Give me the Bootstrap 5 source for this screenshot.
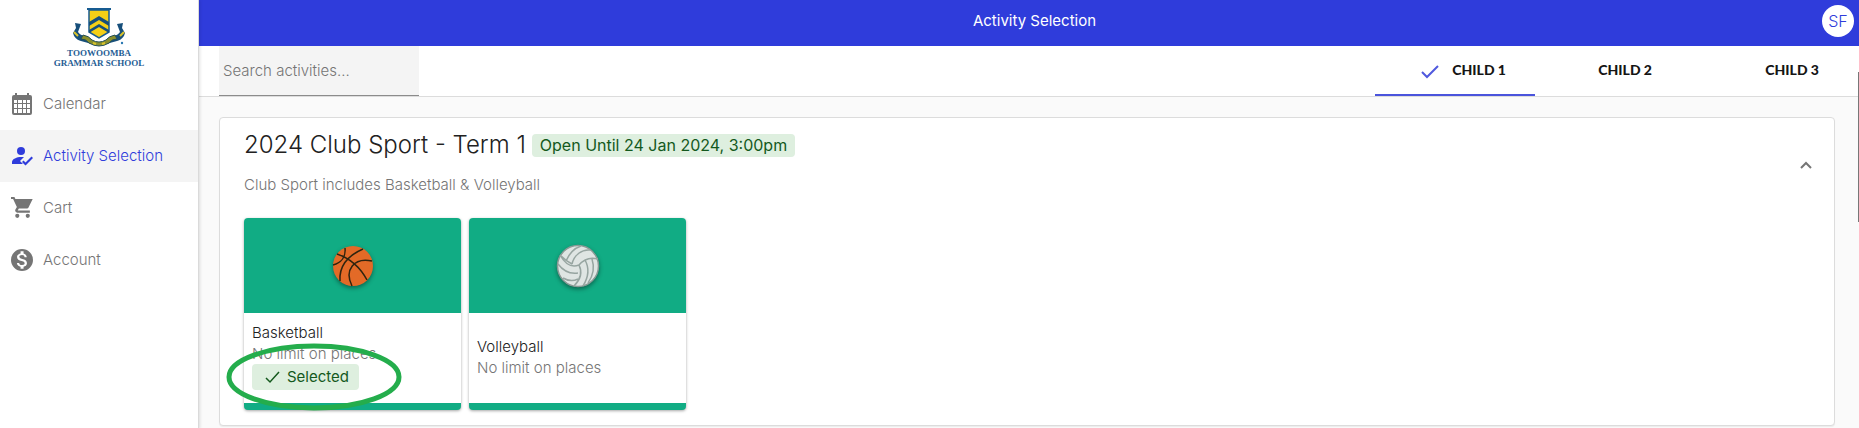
<!DOCTYPE html>
<html lang="en">
<head>
<meta charset="utf-8">
<meta name="viewport" content="width=device-width, initial-scale=1">
<title>Activity Selection</title>
<link rel="stylesheet" href="https://cdn.jsdelivr.net/npm/bootstrap@5.3.0/dist/css/bootstrap.min.css">
<style>
:root { --brand: #2f3cdb; --pitch: #11ac84; --muted: #757575; --line: #dcdcdc; }
body { font-family: Inter, "Open Sans", sans-serif; font-size: 15px; line-height: 20px; font-weight: 300; color: #212121; background: #fafafa; }
.side { width: 199px; background: #fff; border-right: 1px solid #dadada; box-shadow: 1px 0 3px rgba(0,0,0,.12); z-index: 2; }
.crest { height: 78px; padding-top: 8px; line-height: 10px; font-family: "Liberation Serif", serif; font-size: 9px; font-weight: 700; color: #1f5d94; }
.side-link { height: 52px; padding: 0 11px; gap: 10px; color: var(--muted); text-decoration: none; }
.side-link.active { background: #f4f4f4; color: var(--brand); }
.topbar { height: 46px; background: var(--brand); color: #fff; padding: 0 5px 4px 48px; font-weight: 400; }
.avatar { width: 32px; height: 32px; background: #fff; color: var(--brand); font-size: 16px; font-weight: 300; border: 0; }
.tools { height: 51px; background: #fff; border-bottom: 1px solid var(--line); padding: 0 11px 0 20px; }
.search { width: 200px; background: #f4f4f4; border: 0; border-bottom: 1px solid #8b8b8b; border-radius: 0; padding: 0 4px; font-weight: 300; font-size: 15px; }
.search::placeholder { color: #757575; opacity: 1; }
.kid { border: 0; border-bottom: 2px solid transparent; background: none; font: 900 14px/20px Lato, sans-serif; color: #151515; padding: 0 29px 0 0; width: 146px; gap: 10px; }
.kid.active { width: 160px; border-color: #4a54dc; }
.kid.last { width: 167px; }
.content-area { padding: 20px 24px 3px 20px; }
.panel { background: #fff; border: 1px solid var(--line); border-radius: 4px; padding: 14px 20px 15px 24px; box-shadow: 0 1px 1px rgba(0,0,0,.06); }
.panel h1 { font-size: 24px; line-height: 26px; font-weight: 300; }
.heading { gap: 6px; margin-bottom: 17px; }
.tag { background: #deefdf; color: #14591d; border-radius: 4px; font-weight: 400; padding: 2px 10px; line-height: 19px; }
.deadline { font-size: 16px; padding: 2px 8px; }
.toggle { margin-top: 5px; }
.quiet { color: var(--muted); }
.tiles { gap: 8px; margin-top: 23px; }
.tile { width: 217px; background: #fff; border-radius: 4px; box-shadow: 0 1px 3px rgba(0,0,0,.35); border-bottom: 7px solid var(--pitch); overflow: hidden; color: #212121; text-decoration: none; }
.tile-top { height: 95px; background: var(--pitch); }
.tile-text { height: 90px; padding: 0 8px 2px; line-height: 21px; }
.picked { padding: 3px 10px 3px 12px; gap: 6px; line-height: 20px; margin-bottom: 3px; }
.ring { position: absolute; left: -19px; top: 125px; width: 177px; height: 68px; pointer-events: none; }
.ball { filter: drop-shadow(0 2px 2px rgba(0,0,0,.4)); }
.thumb { position: absolute; right: 0; top: 72px; width: 1px; height: 150px; background: #777; }
</style>
</head>
<body>
<div class="d-flex min-vh-100 position-relative">
  <nav class="side flex-shrink-0 position-relative">
    <div class="crest text-center">
      <svg width="54" height="40" viewBox="0 0 54 40" class="d-block mx-auto" aria-hidden="true">
        <path d="M3 15l6 1-3 8c3 5 10 3 14 8l-1 4C12 33 3 34 1 25l3-5z" fill="#174f7b"/>
        <path d="M51 15l-6 1 3 8c-3 5-10 3-14 8l1 4c7-3 16-2 18-11l-3-5z" fill="#174f7b"/>
        <path d="M11 27q6 1 9 5 7 4 14 0 3-4 9-5l2 4q-5 0-8 4-10 6-20 0-3-4-8-4z" fill="#8a8f2c" stroke="#244f58"/>
        <path d="M2 24l4 4M52 24l-4 4M21 35l3 1M30 36l3-1" stroke="#d9c32b" stroke-width="2"/>
        <path d="M17 2h20v22l-10 6-10-6z" fill="#f5cf16" stroke="#175b91" stroke-width="1.500"/>
        <path d="M15 1h24" stroke="#175b91" stroke-width="2"/>
        <path d="M17 14l10-6 10 6v4l-10-6-10 6zM17 22l10-6 10 6v3l-10-6-10 6z" fill="#174f7b"/>
        <circle cx="50" cy="35" r="1.200" fill="#2b78b2"/>
      </svg>
      TOOWOOMBA<br>GRAMMAR SCHOOL
    </div>
    <a class="side-link d-flex align-items-center" href="#"><svg width="22" height="24" viewBox="0 0 22 24" fill="currentColor" aria-hidden="true"><path fill-rule="evenodd" d="M4 1h2v2h10V1h2v2h1a2 2 0 0 1 2 2v16a2 2 0 0 1-2 2H3a2 2 0 0 1-2-2V5a2 2 0 0 1 2-2h1zM3 8v3h3V8zm4 0v3h4V8zm5 0v3h3V8zm4 0v3h3V8zM3 12v4h3v-4zm4 0v4h4v-4zm5 0v4h3v-4zm4 0v4h3v-4zM3 17v4h3v-4zm4 0v4h4v-4zm5 0v4h3v-4zm4 0v4h3v-4z"/></svg>Calendar</a>
    <a class="side-link active d-flex align-items-center" aria-current="page" href="#"><svg width="22" height="22" viewBox="1 2 22 22" fill="currentColor" aria-hidden="true"><circle cx="11" cy="8" r="4"/><path d="M11 14c-4 0-9 2-9 5v2h11l-3-3 4-4zM15.500 22.500L12 19l1.500-1.500 2 2L21.500 13.500 23 15z"/></svg>Activity Selection</a>
    <a class="side-link d-flex align-items-center" href="#"><svg width="22" height="22" viewBox="1 2 21 21" fill="currentColor" aria-hidden="true"><path d="M7 18a2 2 0 1 0 0 4 2 2 0 0 0 0-4zm10 0a2 2 0 1 0 0 4 2 2 0 0 0 0-4zM1 2v2h2l3.600 7.600L5.200 14c-.7 1.300.3 3 1.800 3h12v-2H7.400l1.100-2H16c.7 0 1.400-.4 1.700-1L21.700 4H5.200l-.9-2z"/></svg>Cart</a>
    <a class="side-link d-flex align-items-center" href="#"><svg width="22" height="22" viewBox="2 2 20 20" fill="currentColor" aria-hidden="true"><path fill-rule="evenodd" d="M12 2a10 10 0 1 0 0 20 10 10 0 0 0 0-20zm1.400 16.100V20h-2.700v-1.900c-1.700-.4-3.200-1.500-3.300-3.400h2c.1 1.100.8 1.900 2.600 1.900 2 0 2.400-1 2.400-1.600 0-.8-.4-1.600-2.700-2.100-2.500-.6-4.200-1.600-4.200-3.700 0-1.700 1.400-2.800 3.200-3.200V4h2.700v2c1.900.5 2.800 1.900 2.900 3.400h-2c-.1-1.100-.7-1.900-2.300-1.900-1.500 0-2.400.7-2.400 1.600 0 .8.700 1.400 2.700 1.900 2.100.5 4.200 1.400 4.200 3.900 0 1.800-1.400 2.900-3.100 3.200z"/></svg>Account</a>
  </nav>
  <div class="flex-grow-1">
    <header class="topbar d-flex align-items-center">
      <div class="flex-grow-1 text-center">Activity Selection</div>
      <button class="avatar rounded-circle p-0" type="button">SF</button>
    </header>
    <div class="tools d-flex justify-content-between">
      <input class="search" type="search" placeholder="Search activities..." aria-label="Search activities">
      <div class="d-flex" role="tablist">
        <button class="kid active d-flex align-items-center justify-content-end" type="button" role="tab" aria-selected="true"><svg width="24" height="24" viewBox="0 0 24 24" fill="none" stroke="#5059de" stroke-width="2" aria-hidden="true"><path d="M4 14l5 5L20 8"/></svg>CHILD 1</button>
        <button class="kid d-flex align-items-center justify-content-end" type="button" role="tab" aria-selected="false">CHILD 2</button>
        <button class="kid last d-flex align-items-center justify-content-end" type="button" role="tab" aria-selected="false">CHILD 3</button>
      </div>
    </div>
    <main class="content-area">
      <section class="panel">
        <div class="d-flex align-items-center justify-content-between">
          <div>
            <div class="heading d-flex align-items-center"><h1 class="m-0">2024 Club Sport - Term 1</h1><span class="tag deadline">Open Until 24 Jan 2024, 3:00pm</span></div>
            <p class="quiet m-0">Club Sport includes Basketball &amp; Volleyball</p>
          </div>
          <button class="toggle btn p-0 border-0" type="button" aria-label="Collapse"><svg width="16" height="16" viewBox="0 0 16 16" fill="none" stroke="#757575" stroke-width="2" class="d-block"><path d="M3 10l5-5 5 5"/></svg></button>
        </div>
        <div class="tiles d-flex">
          <div class="position-relative">
            <a class="tile d-block" href="#">
              <div class="tile-top d-flex align-items-center justify-content-center">
                <svg class="ball" width="42" height="42" viewBox="0 0 42 42" aria-hidden="true"><circle cx="21" cy="21" r="20" fill="#e36a27"/><path d="M5 9c12 4 23 13 30 26M1 20c8-2 13-8 12-17M31 4C15 11 7 22 8 36M40 16c-18-4-28 9-20 25" fill="none" stroke="#30240f" stroke-width="1.500"/></svg>
              </div>
              <div class="tile-text d-flex flex-column justify-content-center align-items-start"><span>Basketball</span><span class="quiet">No limit on places</span><span class="tag picked d-flex align-items-center"><svg width="17" height="16" viewBox="0 0 17 16" fill="none" stroke="currentColor" stroke-width="1.500" aria-hidden="true"><path d="M2 9l4 4 9-10"/></svg>Selected</span></div>
            </a>
            <svg class="ring" viewBox="0 0 177 68" fill="none" aria-hidden="true"><ellipse cx="89" cy="34" rx="85" ry="31" stroke="#24ad4c" stroke-width="5"/></svg>
          </div>
          <a class="tile d-block" href="#">
            <div class="tile-top d-flex align-items-center justify-content-center">
              <svg class="ball" width="44" height="44" viewBox="0 0 44 44" aria-hidden="true"><circle cx="22" cy="22" r="20.500" fill="#dfe5e3" stroke="#8a9995" stroke-width="1.500"/><path d="M16 20C18 11 26 5 34 6M10 17C13 10 19 4 25 2M4 11c5 9 11 13 19 10M2 20c6 8 13 10 20 9M7 34c5 3 11 3 15 1M23 21c4 8 1 15-5 21M29 16c5 9 3 18-2 26M36 15c3 9 1 17-4 24M23 21c5-6 12-8 19-6M4 11c3 3 8 7 12 9" fill="none" stroke="#97a5a1" stroke-width="1.500"/></svg>
            </div>
            <div class="tile-text d-flex flex-column justify-content-center"><span>Volleyball</span><span class="quiet">No limit on places</span></div>
          </a>
        </div>
      </section>
    </main>
  </div>
  <div class="thumb"></div>
</div>
<script src="https://cdn.jsdelivr.net/npm/bootstrap@5.3.0/dist/js/bootstrap.bundle.min.js"></script>
</body>
</html>
